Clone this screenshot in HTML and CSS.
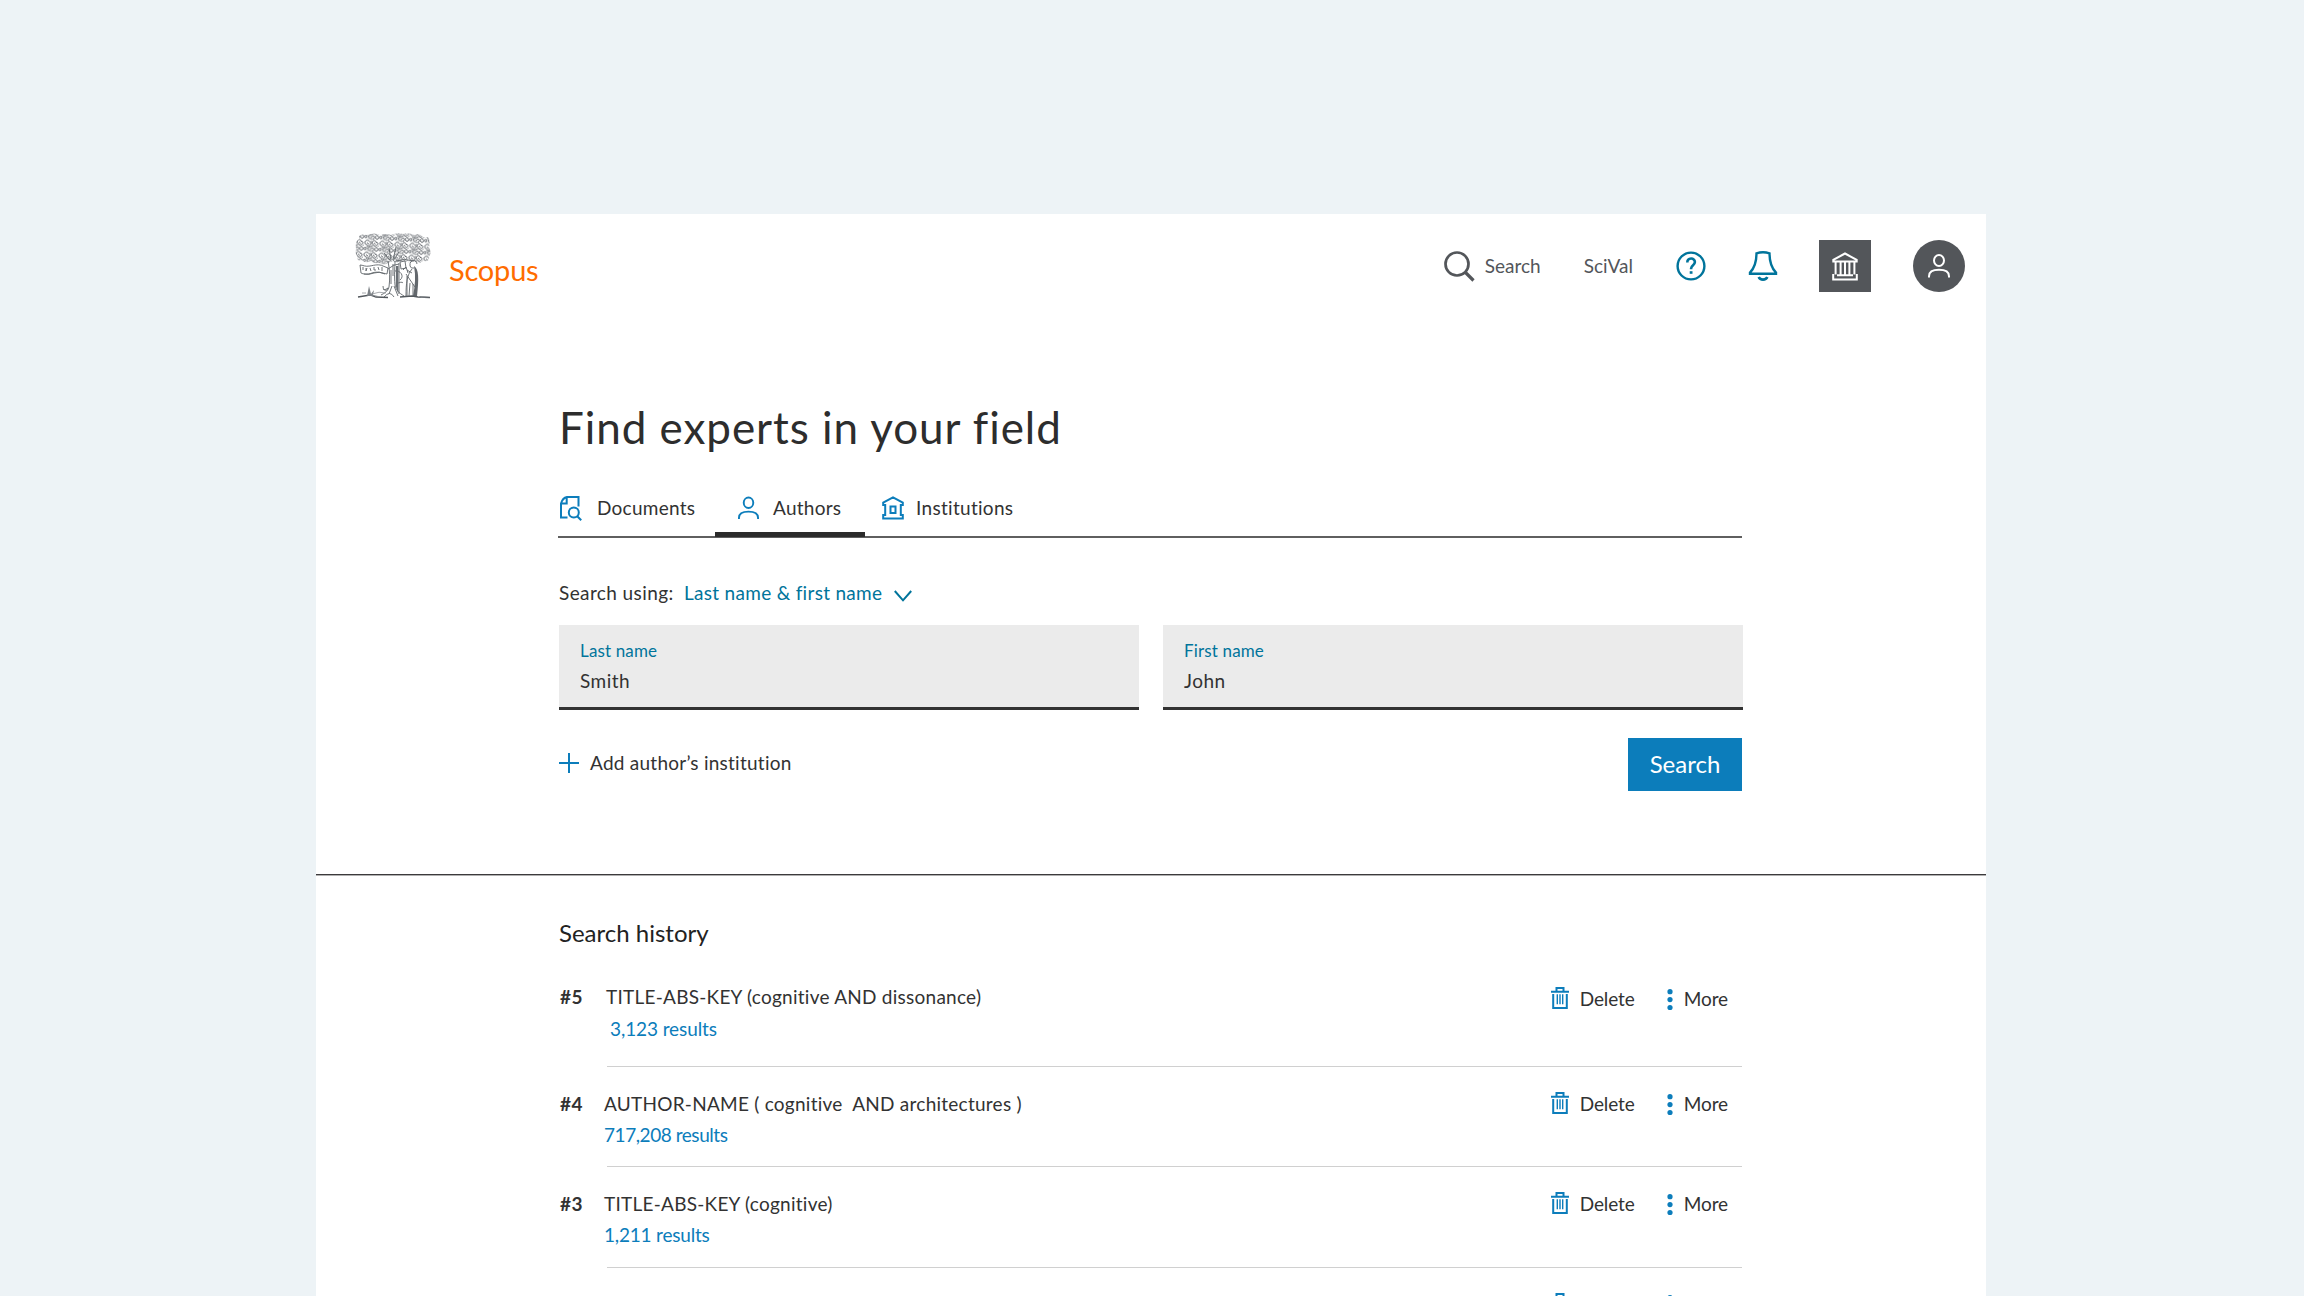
FILE: index.html
```html
<!DOCTYPE html>
<html lang="en">
<head>
<meta charset="utf-8">
<title>Scopus</title>
<link rel="stylesheet" href="styles.css">
</head>
<body>
<svg class="defs" width="0" height="0" aria-hidden="true">
  <defs>
    <pattern id="leaves" width="15" height="12" patternUnits="userSpaceOnUse" patternTransform="rotate(4)">
      <g fill="none" stroke="#54595f" stroke-width="1">
        <path d="M1 3.500C1 .8 4.500.2 5.400 2.200 7.500 1.600 8 4 6.400 5 6 7.400 3 7.200 2.800 5.400 1.600 5.300 1 4.600 1 3.500zM3 3.600l2.200 1.400"/>
        <path d="M8.500 2.200c1-2.200 3.400-1.600 3.600.2 2-.4 2.500 2 .9 2.800-.4 1.700-3.300 1.600-3.300-.2-1.400-.4-1.700-1.600-1.200-2.800zM10.300 3l1.200 1.600"/>
        <path d="M4.500 9c.3-2 3-2.200 3.600-.6 2-.6 3 1.200 1.600 2.400-.2 1.600-2.700 1.600-3 .3-1.500.2-2.400-.8-2.200-2.100zM6.500 9.300l1.600.5"/>
        <path d="M11.400 8.500c.8-1.600 2.600-1 2.600.4 1 .8.400 2.600-1 2.300-1.400.2-2.200-1.500-1.600-2.700zM.8 8.500C2.200 7.600 3.400 8.800 2.600 10.200 1.600 11.400.2 10.400.8 8.500z"/>
      </g>
      <path d="M6.800 6.400l1.600-1 .8 1.600zM2.800 7l1-.2.2 1.500zM13.500 6l1.200-.5v1.500zM7.300 1l1 .2-.5 1zM3.500 11l1 .2-.3.800z" fill="#4b5056"/>
    </pattern>
    <symbol id="person" viewBox="0 0 22 24">
      <ellipse cx="11" cy="6.500" rx="5" ry="5.500"/><path d="M1 23.500v-1.300C1 18 4.500 15.800 11 15.800s10 2.200 10 6.400v1.300"/>
    </symbol>
    <symbol id="trash" viewBox="0 0 18 22">
      <path d="M0 4.800h18M5.500 4.500V1h7v3.500M2.200 7v13.900h13.600V7" fill="none"/><path d="M6.300 7.300v10M9 7.300v10M11.700 7.300v10" stroke-width="1.400"/>
    </symbol>
    <symbol id="dots" viewBox="0 0 6 22">
      <circle cx="3" cy="2.700" r="2.600"/><circle cx="3" cy="10.600" r="2.600"/><circle cx="3" cy="18.500" r="2.600"/>
    </symbol>
  </defs>
</svg>

<main class="panel">
  <header class="header">
    <svg class="tree" width="90" height="80" viewBox="0 0 90 80" aria-hidden="true">
      <path d="M9 10q4-3 9-1 6-3 12 0 6-2 11 0 6-3 12-1 6-2 11 1 6-2 9 2l5 0q3 5 1 10 3 6 0 10 1 5-6 4-5 4-9 0-6 3-11-1-5 4-10 1l-5 2q-5 3-9 0-5 1-8-2-6 3-9-1-5 2-5-4-2-2-1-7-1-8 3-10z" fill="url(#leaves)"/>
      <g fill="none" stroke="#60656a" stroke-width=".9">
        <path d="M34 27l6 7M49 26l-6 9M39 22l2 12M46 21l-3 13"/>
        <path d="M38 35c2 10 2 18 1 26-1 4-4 6-8 8M45 35c0 7-1 14 0 24 1 5 4 8 9 11"/>
        <path d="M41 44v14M43 38v12M42 60l-3 8M44 60l4 10M34 71q6-7 10 0"/>
        <path d="M10 39c3 0 5 2 10 1s9-2 13 0l5 2-1 6c-5-1-9-3-15-1-5 2-9 1-11 0z"/>
        <path d="M13 41v3M16 42v3l1-3M20 42l1 3M24 41v3h2M28 41l1 3M32 41v4M14 48q5 1 10-1t11 1"/>
        <path d="M46 35q8-3 18 0M49 37v31M38 43q6-5 11-5"/>
        <path d="M45 45c5-1 10 5 5 9M33 60q0 6 5 2-1 4-5 1M46 58q6-3 7-1"/>
        <path d="M50 36l5-1 1 7-5 1zM53 44l3-3 2 6M57 44l5 3M56 48l9 13"/>
        <path d="M60 40c-1-6 6-8 7-2M60 40q1 3 4 2M62 43c-5 6-6 14-6 27"/>
        <path d="M57 50v20M60 57l-1 13M63 58v12"/>
      </g>
      <path d="M46 40h2.300v28l-2.500-8z" fill="#6a6f74"/>
      <path d="M64 40c5 3 5 13 3 30h-4c2-10 3-20 1-30z" fill="#63686d"/>
      <path d="M8 71l12-2 6 2 12 .5M50 71l12-1 6 1 12 .5" stroke="#53585d" stroke-width="1.300" fill="none"/>
      <path d="M17 70l2-10 2 8 3-4-1 5 5 1zM69 70l11 1-9 1z" fill="#7b8085"/>
      <path d="M22 68q7-3 14-1M12 67h4" stroke="#92969a" stroke-width=".8" fill="none"/>
    </svg>
    <span class="brand">Scopus</span>
    <nav class="nav">
      <a class="nav-search">
        <svg width="31" height="31" viewBox="0 0 31 31" fill="none" stroke="#53565a" stroke-width="2.700"><circle cx="13" cy="13" r="11.500"/><path d="M21 21l8.500 8.500" stroke-width="3.200"/></svg>
        <span class="txt">Search</span>
      </a>
      <a class="scival">SciVal</a>
      <svg width="30" height="30" viewBox="0 0 30 30" fill="none" stroke="#00749b" stroke-width="2.400"><circle cx="15" cy="15" r="13.400"/><path d="M11.300 11.500c0-5.200 7.600-5.200 7.600-.4 0 3.200-3.800 3-3.800 6.400v.8" stroke-width="2.600"/><path d="M15.100 20.200v2.600" stroke-width="2.800"/></svg>
      <svg width="30" height="30" viewBox="0 0 30 30" fill="none" stroke="#00749b" stroke-width="2.400"><path d="M8.500 2.300q6.500-2 13 0C21.500 12 24 17.500 28 21.600v1.200H2v-1.200C6 17.500 8.500 12 8.500 2.300z"/><path d="M10.700 26q1 2.600 4.300 2.600t4.300-2.600" stroke-width="2.600"/></svg>
      <span class="tile">
        <svg width="26" height="29" viewBox="0 0 26 29" fill="none" stroke="#fff" stroke-width="2"><path d="M1.300 9.500V7.800L13 1.500l11.700 6.300v1.700zM3.600 10v12.500M8.600 10v12.500M13 10v12.500M17.400 10v12.500M22.400 10v12.500M1.200 22v5.500h23.600V22M5 23.300h16"/></svg>
      </span>
      <span class="tile round">
        <svg width="22" height="24" fill="none" stroke="#fff" stroke-width="2"><use href="#person"/></svg>
      </span>
    </nav>
  </header>

  <section class="search">
    <h1>Find experts in your field</h1>
    <div class="tabs">
      <a class="tab documents">
        <svg width="22" height="25" viewBox="0 0 22 25" fill="none" stroke="#0c7dbb" stroke-width="2"><path d="M7.500 21.500H1V7.500Q2.500 2 7 1h11.500v9.500M1 7.500h5.700V2"/><circle cx="13.800" cy="16.500" r="5"/><path d="M17.200 20.300l4 4"/></svg>
        <span>Documents</span>
      </a>
      <a class="tab authors active">
        <svg width="21" height="24" fill="none" stroke="#0c7dbb" stroke-width="2"><use href="#person"/></svg>
        <span>Authors</span>
      </a>
      <a class="tab institutions">
        <svg width="22" height="24" viewBox="0 0 22 24" fill="none" stroke="#0c7dbb" stroke-width="2"><path d="M1.200 9V6.500L11 1.300l9.800 5.200V9h-2v10h2v3.500H1.200V19h2V9zM8.500 10.500h5v6.500h-5z"/></svg>
        <span>Institutions</span>
      </a>
    </div>
    <div class="using">
      <span class="using-label">Search using:</span>
      <a class="using-value">Last name &amp; first name</a>
      <svg width="18" height="12" viewBox="0 0 18 12" fill="none" stroke="#00749b" stroke-width="2"><path d="M.8 1L9 10.300 17.200 1"/></svg>
    </div>
    <div class="fields">
      <div class="field"><label>Last name</label><span>Smith</span></div>
      <div class="field"><label>First name</label><span>John</span></div>
    </div>
    <div class="actions">
      <a class="add">
        <svg width="20" height="20" viewBox="0 0 20 20" stroke="#0c7dbb" stroke-width="2"><path d="M10 0v20M0 10h20"/></svg>
        <span>Add author’s institution</span>
      </a>
      <button>Search</button>
    </div>
  </section>

  <section class="history">
    <h2>Search history</h2>
    <div class="row first">
      <b>#5</b>
      <div class="entry">
        <div class="query">TITLE-ABS-KEY (cognitive AND dissonance)<br><a class="results">3,123 results</a></div>
        <div class="tools"><svg class="trash" width="18" height="22"><use href="#trash"/></svg><span class="delete">Delete</span><svg class="dots" width="6" height="22"><use href="#dots"/></svg><span>More</span></div>
      </div>
    </div>
    <div class="row">
      <b>#4</b>
      <div class="entry">
        <div class="query">AUTHOR-NAME ( cognitive&nbsp; AND architectures )<br><a class="results long">717,208 results</a></div>
        <div class="tools"><svg class="trash" width="18" height="22"><use href="#trash"/></svg><span class="delete">Delete</span><svg class="dots" width="6" height="22"><use href="#dots"/></svg><span>More</span></div>
      </div>
    </div>
    <div class="row">
      <b>#3</b>
      <div class="entry">
        <div class="query">TITLE-ABS-KEY (cognitive)<br><a class="results">1,211 results</a></div>
        <div class="tools"><svg class="trash" width="18" height="22"><use href="#trash"/></svg><span class="delete">Delete</span><svg class="dots" width="6" height="22"><use href="#dots"/></svg><span>More</span></div>
      </div>
    </div>
    <div class="row">
      <b>#2</b>
      <div class="entry">
        <div class="query">AUTHOR-NAME ( cognitive&nbsp; AND architectures )</div>
        <div class="tools"><svg class="trash" width="18" height="22"><use href="#trash"/></svg><span class="delete">Delete</span><svg class="dots" width="6" height="22"><use href="#dots"/></svg><span>More</span></div>
      </div>
    </div>
  </section>
</main>
</body>
</html>
```
FILE: styles.css
```css
* { box-sizing: border-box; }
body {
  margin: 0;
  height: 1296px;
  padding-top: 214px;
  overflow: hidden;
  background: #edf3f6;
  color: #323232;
  font: 19px/24px Lato, sans-serif;
  letter-spacing: .25px;
}
svg { display: block; flex: none; }
.defs { position: absolute; }
.panel { width: 1670px; height: 1082px; margin-left: 316px; background: #fff; overflow: hidden; }

.header { display: flex; align-items: center; height: 104px; padding: 0 21px 0 34px; }
.tree { margin-bottom: 0; }
.brand { margin-left: 9px; padding-top: 8px; color: #ff6c00; font-size: 29px; line-height: 34px; letter-spacing: -.2px; }
.nav { display: flex; align-items: center; gap: 42px; margin-left: auto; color: #53565a; letter-spacing: 0; }
.nav-search { display: flex; align-items: center; gap: 10px; margin-right: 1px; }
.scival { margin-right: 1px; }
.nav > svg { position: relative; left: 1px; }
.nav-search, .scival { position: relative; left: 1px; }
.tile { display: flex; align-items: center; justify-content: center; width: 52px; height: 52px; background: #53565a; }
.round { border-radius: 50%; }

.search { height: 557px; padding: 79px 243px 0; border-bottom: 1px solid #3c3a3c; box-shadow: 0 1px #b0b0b0; }
h1 { margin: 0; color: #2d2d2d; font-size: 44px; line-height: 60px; font-weight: 400; letter-spacing: .95px; }
.tabs { display: flex; height: 58px; margin: 23px 1px 0 -1px; border-bottom: 2px solid #5f5f5f; }
.tab { display: flex; align-items: center; height: 57px; padding-top: 4px; border-bottom: 5px solid transparent; }
.documents { width: 157px; padding-left: 2px; gap: 15px; }
.authors { width: 150px; padding-left: 23px; gap: 14px; }
.institutions { padding-left: 17px; gap: 12px; letter-spacing: .3px; }
.active { border-color: #2b2b2b; }
.using { display: flex; align-items: center; height: 30px; margin-top: 40px; }
.using-label { width: 125px; letter-spacing: .4px; }
.using-value { width: 210px; color: #00749b; letter-spacing: .3px; }
.using svg { margin-top: 6px; }
.fields { display: grid; grid-template-columns: 580px 580px; gap: 24px; margin-top: 17px; }
.field { display: flex; flex-direction: column; gap: 8px; height: 85px; padding: 16px 21px 0; background: #ebebeb; border-bottom: 3px solid #333; }
.field label { color: #00749b; font-size: 17px; line-height: 20px; letter-spacing: .15px; }
.field span { letter-spacing: .5px; }
.actions { display: flex; justify-content: space-between; align-items: center; margin: 28px 1px 0 0; }
.add { display: flex; align-items: center; gap: 11px; padding-bottom: 3px; }
.add span { margin-top: -1px; }
button { width: 114px; height: 53px; padding: 0 0 2px; border: 0; background: #0c7dbb; color: #fff; font: 24px/48px Lato, sans-serif; }

.history { padding: 43px 244px 0 243px; }
h2 { margin: 0 0 33px; color: #222; font-size: 24px; line-height: 30px; font-weight: 400; letter-spacing: 0; }
.row { display: grid; grid-template-columns: 48px 1fr; height: 100.300px; line-height: 31.500px; }
.row b { padding-left: 1px; letter-spacing: .6px; }
.row b, .entry { padding-top: 20.500px; }
.first { height: 86px; }
.first b, .first .entry { padding-top: 0; }
.entry { display: flex; justify-content: space-between; border-bottom: 1px solid #d0d0d0; }
.query { margin-left: -3px; }
.first .query { margin-left: -1px; }
.results { color: #0c7dbb; letter-spacing: -.2px; }
.first .results { padding-left: 4px; letter-spacing: -.1px; }
.long { letter-spacing: -.45px; }
.tools { display: flex; align-items: center; height: 32px; padding-right: 14px; letter-spacing: -.1px; }
.first .tools { margin-top: 1.500px; }
.trash { margin-bottom: 1px; stroke: #0c7dbb; stroke-width: 2; }
.delete { width: 87px; margin-left: 11px; }
.dots { margin: 3px 11px 0 0; fill: #0c7dbb; }
```
